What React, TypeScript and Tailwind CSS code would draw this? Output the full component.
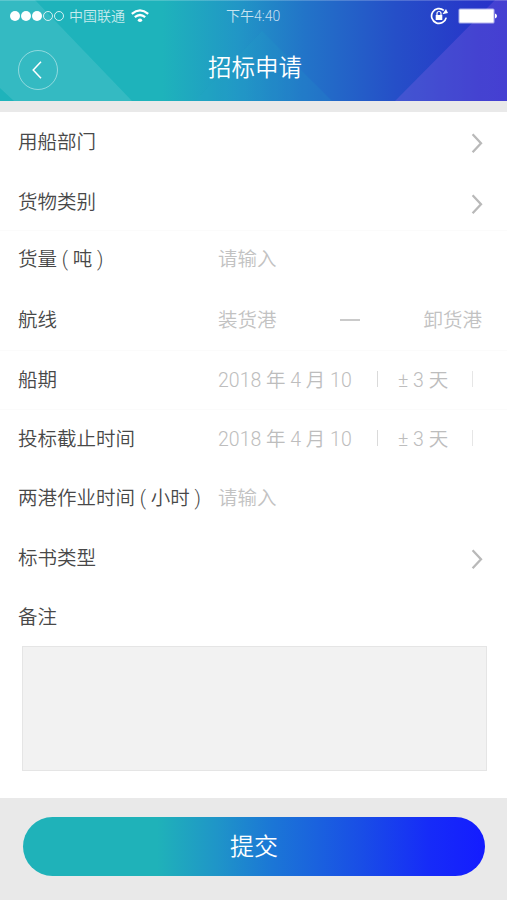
import type { ReactNode } from 'react';

const Chevron = ({ className = '' }: { className?: string }) => (
  <svg className={`ml-auto mr-[24px] h-5 w-3 ${className}`} viewBox="0 0 12 20" fill="none" stroke="#b9b9b9" strokeWidth="2.3">
    <path d="M1.6 1.2 10 10.2 1.6 19.2" />
  </svg>
);

function Row({ label, size, line, children }: { label: string; size: string; line?: boolean; children?: ReactNode }) {
  return (
    <div className={`flex shrink-0 items-center pl-[18px] ${size} ${line ? 'border-b border-[#fbfbfb]' : ''}`}>
      <span className="mt-[2px] w-[200px] shrink-0 whitespace-pre text-[19.5px] leading-7 text-[#484848]">{label}</span>
      {children}
    </div>
  );
}

const Hint = ({ children }: { children: ReactNode }) => (
  <span className="mt-[2px] text-[19.5px] leading-7 whitespace-pre text-[#c2c2c2]">{children}</span>
);

const DateFields = () => (
  <>
    <span className="mt-[2px] w-[159px] text-[19.5px] leading-7 whitespace-pre text-[#bdbdbd]">2018 年 4 月 10</span>
    <span className="mb-[2px] h-4 w-px bg-[#dadada]" />
    <span className="mt-[2px] ml-5 w-[74px] text-[19.5px] leading-7 whitespace-pre text-[#bdbdbd]">± 3 天</span>
    <span className="mb-[2px] h-4 w-px bg-[#e6e6e6]" />
  </>
);

function StatusBar() {
  return (
    <div className="relative flex h-8 items-center pl-[10px] pr-[10px] text-white">
      <div className="flex gap-px">
        <i className="size-[10px] rounded-full bg-white" />
        <i className="size-[10px] rounded-full bg-white" />
        <i className="size-[10px] rounded-full bg-white" />
        <i className="size-[10px] rounded-full border border-white/80" />
        <i className="size-[10px] rounded-full border border-white/80" />
      </div>
      <span className="ml-[5px] text-[14px] leading-5 text-white/75">中国联通</span>
      <svg className="ml-[6px] h-[14px] w-[18px]" viewBox="0 0 18 14" fill="none" stroke="white" strokeWidth="2.2">
        <path d="M.8 4.8Q9-2 17.2 4.8M3.8 8.2Q9 3.8 14.2 8.2" />
        <ellipse cx="9" cy="11.2" rx="2.2" ry="1.7" fill="white" stroke="none" />
      </svg>
      <span className="ml-[77px] text-[14px] leading-5 text-white/75">下午4:40</span>
      <svg className="ml-auto size-[18px]" viewBox="0 0 18 18" fill="none" stroke="white" strokeWidth="1.7">
        <path d="M13.8 3.4A7.4 7.4 0 1 0 16.2 10.6" />
        <path d="m12.4 7.2 5.6-1.1-2-4Z" fill="white" stroke="none" />
        <rect x="5.7" y="8" width="6.6" height="5" fill="white" stroke="none" />
        <path d="M7 8V6.5a2 2 0 0 1 4 0V8" strokeWidth="1.2" />
      </svg>
      <svg className="ml-[10px] h-4 w-[39px]" viewBox="0 0 39 16">
        <rect x=".5" y=".5" width="36" height="15" rx="1.5" fill="white" fillOpacity=".6" />
        <rect x="1.5" y="1.5" width="34" height="13" rx="1" fill="white" />
        <path d="M37 5.5q2 .6 2 2.5t-2 2.5Z" fill="white" />
      </svg>
    </div>
  );
}

export default function App() {
  return (
    <div className="flex h-[900px] w-[507px] flex-col overflow-hidden bg-[#e9e9e9] font-['Roboto','Noto_Sans_CJK_SC',sans-serif] font-[350]">
      <header className="relative h-[101px] shrink-0 bg-[linear-gradient(90deg,#1eb3bb_0%,#1eb3bb_32%,#2196c6_47%,#2274c8_60%,#254fc8_78%,#2736c9_94%,#2830ca_100%)]">
        <svg className="absolute inset-0 h-[101px] w-[507px]" viewBox="0 0 507 101">
          <path d="M0 0H35L132 101H14L0 88Z" fill="white" fillOpacity=".1" />
          <path d="M395 101 495 0H507V101Z" fill="#9b6bed" fillOpacity=".25" />
          <path d="M195 101 262 31 332 101Z" fill="#2aaccb" fillOpacity=".13" />
          <path d="M0 .5H507" stroke="white" strokeOpacity=".2" />
        </svg>
        <StatusBar />
        <div className="relative flex h-[69px] items-center">
          <button className="mt-[7px] ml-[18px] flex size-10 items-center justify-center rounded-full border border-white/45">
            <svg className="mr-[2px] h-[18px] w-[10px]" viewBox="0 0 10 18" fill="none" stroke="white" strokeWidth="1.5">
              <path d="M9 .7 1.2 9 9 17.3" />
            </svg>
          </button>
          <h1 className="mt-[2px] ml-[150px] text-[23.5px] leading-8 text-white">招标申请</h1>
        </div>
      </header>

      <main className="mt-[11px] flex h-[686px] shrink-0 flex-col bg-white">
        <Row label="用船部门" size="h-[59px] pt-px"><Chevron className="mt-px" /></Row>
        <Row label="货物类别" size="h-[60px] pt-[2px]" line><Chevron className="mt-[5px]" /></Row>
        <Row label="货量 ( 吨 )" size="h-[56px]"><Hint>请输入</Hint></Row>
        <Row label="航线" size="h-[64px] pt-[2px]" line>
          <Hint>装货港</Hint>
          <span className="ml-[63px] h-[2px] w-5 bg-[#cacaca]" />
          <span className="mt-[2px] ml-[64px] text-[19.5px] leading-7 text-[#c2c2c2]">卸货港</span>
        </Row>
        <Row label="船期" size="h-[59px] pb-px" line><DateFields /></Row>
        <Row label="投标截止时间" size="h-[59px] pb-[2px]"><DateFields /></Row>
        <Row label="两港作业时间 ( 小时 )" size="h-[60px] pb-[2px]"><Hint>请输入</Hint></Row>
        <Row label="标书类型" size="h-[59px] pb-[2px]"><Chevron className="mt-[3px]" /></Row>
        <Row label="备注" size="h-[58px]" />
        <textarea className="mx-auto block h-[125px] w-[465px] shrink-0 translate-x-px resize-none border border-[#e5e5e5] bg-[#f2f2f2]" />
      </main>

      <footer className="flex h-[102px] shrink-0 items-start bg-[#e9e9e9] pt-[19px] pl-[23px]">
        <button className="h-[59px] w-[462px] rounded-full bg-[linear-gradient(90deg,#1fb2b9_0%,#1fb2b9_29%,#1f95c8_42%,#1b76d6_54%,#194ee6_73%,#162bf8_88%,#141cff_100%)] text-[24px] leading-8 text-white">
          提交
        </button>
      </footer>
    </div>
  );
}
